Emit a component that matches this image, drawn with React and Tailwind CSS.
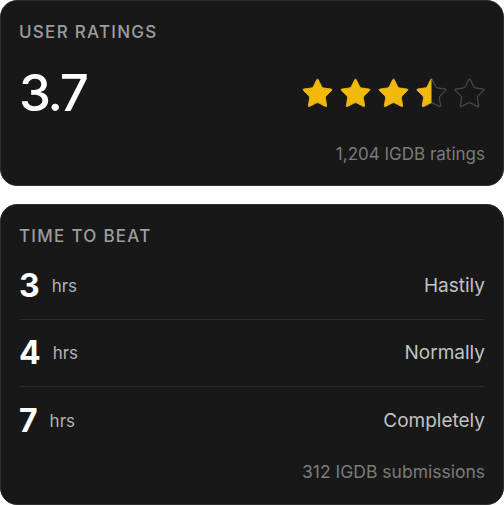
import React from 'react';

const STAR =
    'M11.525 2.295a.53.53 0 0 1 .95 0l2.31 4.679a2.123 2.123 0 0 0 1.595 1.16l5.166.756a.53.53 0 0 1 .294.904l-3.736 3.638a2.123 2.123 0 0 0-.611 1.878l.882 5.14a.53.53 0 0 1-.771.56l-4.618-2.428a2.122 2.122 0 0 0-1.973 0L6.396 21.01a.53.53 0 0 1-.77-.56l.881-5.139a2.122 2.122 0 0 0-.611-1.879L2.16 9.795a.53.53 0 0 1 .294-.906l5.165-.755a2.122 2.122 0 0 0 1.597-1.16z';

const Star = ({ fill, id }) => (
    // fill: 1 = full, 0.5 = half, 0 = empty
    <svg width="29" height="28" viewBox="2 1.9 20 19.4" className="overflow-visible">
        <defs>
            <clipPath id={id}>
                <rect x="0" y="0" width="12" height="24" />
            </clipPath>
        </defs>
        {fill === 1 ? (
            <path d={STAR} fill="#f0b90b" stroke="#f0b90b" strokeWidth="0.6" strokeLinejoin="round" />
        ) : (
            <>
                <path d={STAR} fill="none" stroke="#474747" strokeWidth="0.9" strokeLinejoin="round" />
                {fill === 0.5 && (
                    <path
                        d={STAR}
                        fill="#f0b90b"
                        stroke="#f0b90b"
                        strokeWidth="0.6"
                        strokeLinejoin="round"
                        clipPath={`url(#${id})`}
                    />
                )}
            </>
        )}
    </svg>
);

const rows = [
    { hours: 3, label: 'Hastily' },
    { hours: 4, label: 'Normally' },
    { hours: 7, label: 'Completely' },
];

const Card = ({ children, className = '' }) => (
    <div className={`bg-[#181818] border border-[#2f2f2f] rounded-[17px] px-[18px] ${className}`}>
        {children}
    </div>
);

const Heading = ({ children }) => (
    <h3 className="text-[17px] leading-6 font-medium tracking-[0.075em] text-[#9d9d9d] uppercase">
        {children}
    </h3>
);

export default function App() {
    const stars = [1, 1, 1, 0.5, 0];

    return (
        <div
            className="w-[504px] min-h-[505px] bg-white flex flex-col gap-[18px]"
            style={{ fontFamily: 'Inter, "Noto Sans", sans-serif' }}
        >
            {/* User ratings */}
            <Card className="h-[186px] pt-[19px]">
                <Heading>User Ratings</Heading>
                <div className="mt-[23px] flex items-center justify-between">
                    <span className="text-[51px] leading-[52px] font-medium tracking-[-0.045em] text-white">3.7</span>
                    <div className="flex items-center gap-[9px] mr-[1px]">
                        {stars.map((s, i) => (
                            <Star key={i} fill={s} id={`star-clip-${i}`} />
                        ))}
                    </div>
                </div>
                <p className="mt-[23px] text-right text-[17px] leading-6 text-[#7b7b7b]">1,204 IGDB ratings</p>
            </Card>

            {/* Time to beat */}
            <Card className="flex-1 pt-[19px] pb-[18px]">
                <Heading>Time to Beat</Heading>
                <div className="mt-[5px]">
                    {rows.map((r, i) => (
                        <div
                            key={r.hours}
                            className={`h-[67px] flex items-center justify-between ${
                                i < rows.length - 1 ? 'border-b border-[#2a2a2a]' : ''
                            }`}
                        >
                            <div className="flex items-center gap-3">
                                <span className="text-[32px] leading-10 font-bold text-white">{r.hours}</span>
                                <span className="text-[17px] leading-6 text-[#b3b3b3]">hrs</span>
                            </div>
                            <span className="text-[19px] leading-7 text-[#c2c2c2]">{r.label}</span>
                        </div>
                    ))}
                </div>
                <p className="mt-[6px] text-right text-[17.5px] leading-6 text-[#7b7b7b]">312 IGDB submissions</p>
            </Card>
        </div>
    );
}
